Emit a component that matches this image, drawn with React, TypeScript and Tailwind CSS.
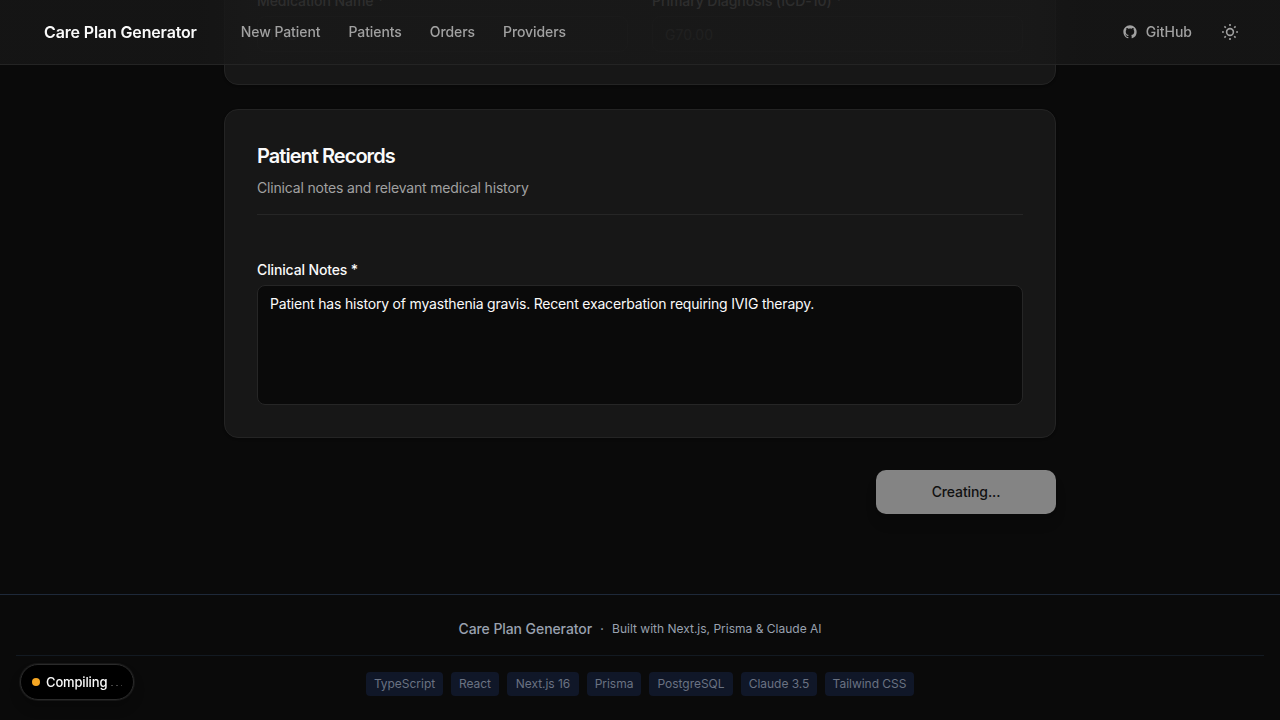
import React from "react";

const links = ["New Patient", "Patients", "Orders", "Providers"];
const stack = [
  { name: "TypeScript", width: "w-[77px]" },
  { name: "React", width: "w-12" },
  { name: "Next.js 16", width: "w-[72px]" },
  { name: "Prisma", width: "w-[54px]" },
  { name: "PostgreSQL", width: "w-[84px]" },
  { name: "Claude 3.5", width: "w-[76px]" },
  { name: "Tailwind CSS", width: "w-[89px]" },
];

function GitHubIcon() {
  return (
    <svg width="16" height="16" viewBox="0 0 24 24" fill="currentColor" aria-hidden="true">
      <path d="M12 2C6.477 2 2 6.484 2 12.017c0 4.425 2.865 8.18 6.839 9.504.5.092.682-.217.682-.483 0-.237-.008-.868-.013-1.703-2.782.605-3.369-1.343-3.369-1.343-.454-1.158-1.11-1.466-1.11-1.466-.908-.62.069-.608.069-.608 1.003.07 1.531 1.032 1.531 1.032.892 1.53 2.341 1.088 2.91.832.092-.647.35-1.088.636-1.338-2.22-.253-4.555-1.113-4.555-4.951 0-1.093.39-1.988 1.029-2.688-.103-.253-.446-1.272.098-2.65 0 0 .84-.27 2.75 1.026A9.564 9.564 0 0112 6.844c.85.004 1.705.115 2.504.337 1.909-1.296 2.747-1.027 2.747-1.027.546 1.379.202 2.398.1 2.651.64.7 1.028 1.595 1.028 2.688 0 3.848-2.339 4.695-4.566 4.943.359.309.678.92.678 1.855 0 1.338-.012 2.419-.012 2.747 0 .268.18.58.688.482A10.019 10.019 0 0022 12.017C22 6.484 17.522 2 12 2z" />
    </svg>
  );
}

function SunIcon() {
  return (
    <svg width="16" height="16" viewBox="0 0 16 16" fill="none" stroke="currentColor" strokeWidth="1.6" aria-hidden="true">
      <circle cx="8" cy="8" r="3.4" />
      <path d="M8 0v1.9M8 14.1V16M0 8h1.9M14.1 8H16M2.4 2.4l1.4 1.4M12.2 12.2l1.4 1.4M2.4 13.6l1.4-1.4M12.2 3.8l1.4-1.4" />
    </svg>
  );
}

function Header() {
  return (
    <header className="fixed inset-x-0 top-0 z-10 flex h-[65px] items-center justify-between border-b border-[#242424] bg-[linear-gradient(90deg,#171717d9_200px,#191919d9_250px,#191919d9_1030px,#171717d9_1080px)] pr-[42px] pl-11">
      <div className="flex items-center gap-11">
        <span className="text-base font-semibold tracking-[-0.15px] text-[#fafafa]">Care Plan Generator</span>
        <nav className="flex gap-7 text-sm font-medium tracking-[-0.08px] text-[#a1a1a1]">
          {links.map((l) => (
            <a key={l}>{l}</a>
          ))}
        </nav>
      </div>
      <div className="flex items-center gap-[30px] text-[#a1a1a1]">
        <a className="flex items-center gap-2 text-sm font-medium">
          <GitHubIcon />
          GitHub
        </a>
        <SunIcon />
      </div>
    </header>
  );
}

function Field({ label, value }: { label: string; value: string }) {
  return (
    <div className="flex flex-1 flex-col gap-[5px]">
      <label className="text-sm leading-5 font-medium tracking-[-0.07px] text-[#a0a0a0]">{label}</label>
      <div className="h-9 rounded-lg border border-[#222222] bg-[#171717] px-3 text-sm leading-9 text-[#484848]">{value}</div>
    </div>
  );
}

export default function App() {
  return (
    <div className="flex h-[720px] flex-col overflow-hidden bg-[#0a0a0a] font-['Inter',sans-serif] text-[#fafafa]">
      <Header />
      <main className="mx-auto flex w-[832px] flex-1 flex-col">
        <section className="-mt-10 flex h-[125px] shrink-0 items-end gap-6 rounded-b-[14px] border border-[#242424] bg-[#171717] px-8 pb-8 shadow-sm">
          <Field label="Medication Name *" value="IVIG" />
          <Field label="Primary Diagnosis (ICD-10) *" value="G70.00" />
        </section>

        <section className="mt-6 h-[329px] shrink-0 rounded-[14px] border border-[#242424] bg-[#171717] p-8 shadow-sm">
          <div className="border-b border-[#262626] pb-4">
            <h2 className="text-xl leading-7 font-semibold tracking-[-0.96px]">Patient Records</h2>
            <p className="mt-2 text-sm leading-5 tracking-[-0.175px] text-[#a1a1a1]">Clinical notes and relevant medical history</p>
          </div>
          <label className="mt-[45px] block text-sm leading-5 font-medium tracking-[-0.14px]">Clinical Notes *</label>
          <div className="mt-[5px] h-[120px] rounded-lg border border-[#262626] bg-[#0a0a0a] px-3 py-2 text-sm leading-5 tracking-[-0.188px]">
            Patient has history of myasthenia gravis. Recent exacerbation requiring IVIG therapy.
          </div>
        </section>

        <button className="mt-8 h-11 w-[180px] self-end rounded-[10px] bg-[#848484] text-sm font-medium tracking-[-0.1px] text-[#111111] shadow-lg">
          Creating...
        </button>
      </main>

      <footer className="flex h-[126px] shrink-0 flex-col border-t border-[#1e2939] px-4">
        <div className="flex h-[60px] items-center justify-center gap-2 pt-2 text-[#99a1af]">
          <span className="text-sm font-medium tracking-[-0.08px]">Care Plan Generator</span>
          <span className="text-sm">·</span>
          <span className="text-xs">Built with Next.js, Prisma &amp; Claude AI</span>
        </div>
        <div className="flex justify-center gap-2 border-t border-[#131a22] pt-4 text-xs tracking-[-0.03px] text-[#6a7282]">
          {stack.map((s) => (
            <span key={s.name} className={`h-6 rounded bg-[#101728] text-center leading-6 whitespace-nowrap ${s.width}`}>
              {s.name}
            </span>
          ))}
        </div>
      </footer>

      <div className="fixed bottom-5 left-5 flex h-9 w-[114px] items-center rounded-full border border-[#2a2a2a] bg-black pl-[11px] text-[13px] font-medium shadow-[0_0_0_1px_#171717,0_8px_12px_#00000030]">
        <span className="mr-1.5 size-2 rounded-full bg-[#f5a623]" />
        <span className="pt-px tracking-[-0.15px]">Compiling</span>
        <span className="ml-[4px] flex gap-[3px] pt-[7px]">
          <i className="size-[1.6px] rounded-full bg-[#505050]" />
          <i className="size-[1.6px] rounded-full bg-[#505050]" />
          <i className="size-[1.6px] rounded-full bg-[#505050]" />
        </span>
      </div>
    </div>
  );
}
